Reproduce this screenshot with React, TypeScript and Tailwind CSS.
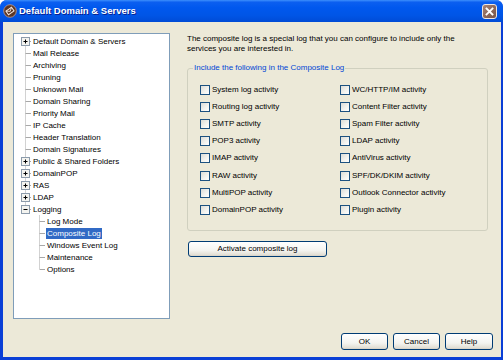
import React from 'react';

type Node = {
  label: string;
  level: 1 | 2;
  box?: '+' | '-';
  first?: boolean;
  last?: boolean;
  selected?: boolean;
};

const tree: Node[] = [
  { label: 'Default Domain & Servers', level: 1, box: '+', first: true },
  { label: 'Mail Release', level: 1 },
  { label: 'Archiving', level: 1 },
  { label: 'Pruning', level: 1 },
  { label: 'Unknown Mail', level: 1 },
  { label: 'Domain Sharing', level: 1 },
  { label: 'Priority Mail', level: 1 },
  { label: 'IP Cache', level: 1 },
  { label: 'Header Translation', level: 1 },
  { label: 'Domain Signatures', level: 1 },
  { label: 'Public & Shared Folders', level: 1, box: '+' },
  { label: 'DomainPOP', level: 1, box: '+' },
  { label: 'RAS', level: 1, box: '+' },
  { label: 'LDAP', level: 1, box: '+' },
  { label: 'Logging', level: 1, box: '-', last: true },
  { label: 'Log Mode', level: 2 },
  { label: 'Composite Log', level: 2, selected: true },
  { label: 'Windows Event Log', level: 2 },
  { label: 'Maintenance', level: 2 },
  { label: 'Options', level: 2, last: true },
];

const leftChecks = [
  'System log activity',
  'Routing log activity',
  'SMTP activity',
  'POP3 activity',
  'IMAP activity',
  'RAW activity',
  'MultiPOP activity',
  'DomainPOP activity',
];

const rightChecks = [
  'WC/HTTP/IM activity',
  'Content Filter activity',
  'Spam Filter activity',
  'LDAP activity',
  'AntiVirus activity',
  'SPF/DK/DKIM activity',
  'Outlook Connector activity',
  'Plugin activity',
];

const font = "font-['Liberation_Sans',Arial,sans-serif]";

// tree connector drawn in an 11x12 cell
const Connector: React.FC<{ node: Node }> = ({ node }) => {
  const top = node.first ? 6 : 0;
  const bottom = node.last ? 6 : 12;
  return (
    <svg width="11" height="12" viewBox="0 0 11 12" className="shrink-0">
      <line x1="5.5" y1={top} x2="5.5" y2={bottom} stroke="#d2d2d2" strokeWidth="1" />
      <line x1="5.5" y1="6.5" x2="11" y2="6.5" stroke="#a8a8a8" strokeWidth="1" />
      {node.box && (
        <>
          <rect x="1.5" y="2.5" width="8" height="8" fill="#f4f4f0" stroke="#8c9bab" strokeWidth="1" />
          <line x1="3.5" y1="6.5" x2="7.5" y2="6.5" stroke="#000" strokeWidth="1" />
          {node.box === '+' && <line x1="5.5" y1="4.5" x2="5.5" y2="8.5" stroke="#000" strokeWidth="1" />}
        </>
      )}
    </svg>
  );
};

const XpButton: React.FC<{ children: React.ReactNode; className?: string }> = ({ children, className }) => (
  <button
    className={`flex items-center justify-center rounded-[3px] border border-[#003c74] bg-[linear-gradient(to_bottom,#ffffff_0%,#f4f4f0_60%,#e3e0d6_90%,#d6d0c5_100%)] text-[8px] text-black ${className ?? ''}`}
  >
    {children}
  </button>
);

const Check: React.FC<{ label: string }> = ({ label }) => (
  <div className="flex h-[17.2px] items-center gap-[2px]">
    <span className="h-[10px] w-[10px] shrink-0 border border-[#1c5180] bg-[linear-gradient(135deg,#dcdcd7_0%,#f4f4f0_60%,#ffffff_100%)]" />
    <span className="whitespace-nowrap text-[8px] leading-[10px]">{label}</span>
  </div>
);

export default function App() {
  return (
    <div className={`flex h-[360px] w-[503px] flex-col overflow-hidden rounded-t-[7px] bg-[#0a3fd6] ${font}`}>
      {/* Title bar */}
      <div className="flex h-[22px] shrink-0 items-center bg-[linear-gradient(to_bottom,#3d8ffc_0%,#0b5ff0_10%,#0058ee_35%,#0055e6_70%,#004bd6_100%)] pl-[3px] pr-[6px]">
        <svg width="14" height="14" viewBox="0 0 14 14" className="shrink-0">
          <circle cx="7" cy="7" r="6.3" fill="#5b3626" stroke="#c9a08a" strokeWidth="0.8" />
          <g transform="rotate(-35 7 7)">
            <rect x="3.6" y="4.8" width="6.8" height="4.4" fill="none" stroke="#f1e6dd" strokeWidth="1" />
            <path d="M3.6 4.8 L7 7.4 L10.4 4.8" fill="none" stroke="#f1e6dd" strokeWidth="0.8" />
          </g>
        </svg>
        <span className="ml-[2px] pt-[1px] text-[9.5px] font-bold text-white [text-shadow:1px_1px_0_#0a1f8f]">
          Default Domain &amp; Servers
        </span>
        <span className="ml-auto flex h-[15px] w-[15px] items-center justify-center rounded-[3px] border border-[#efe6e0] bg-[linear-gradient(135deg,#a88476_0%,#8a6556_60%,#76554a_100%)]">
          <svg width="9" height="9" viewBox="0 0 9 9">
            <path d="M1.5 1.5 L7.5 7.5 M7.5 1.5 L1.5 7.5" stroke="#fff" strokeWidth="1.8" strokeLinecap="square" />
          </svg>
        </span>
      </div>

      {/* Body */}
      <div className="mb-[3px] ml-[3px] mr-[2px] flex flex-1 flex-col bg-[#ece9d8] pb-[7px] pl-[10px] pr-[8px] pt-[11px]">
        <div className="flex items-start">
          {/* Tree */}
          <div className="h-[286px] w-[157px] shrink-0 border border-[#7f9db9] bg-white pt-[1px]">
            {tree.map((n) => (
              <div
                key={n.label}
                className={`flex h-[12px] items-center ${n.level === 1 ? 'pl-[6px]' : 'pl-[20px]'}`}
              >
                <Connector node={n} />
                <span
                  className={`ml-[1px] h-[11px] whitespace-nowrap px-[1px] text-[8px] leading-[11px] ${
                    n.selected ? 'bg-[#316ac5] text-white' : 'text-black'
                  }`}
                >
                  {n.label}
                </span>
              </div>
            ))}
          </div>

          {/* Right panel */}
          <div className="ml-[17px] mt-[1px] flex flex-1 flex-col">
            <p className="text-[8px] leading-[10px] text-black">
              The composite log is a special log that you can configure to include only the
              <br />
              services you are interested in.
            </p>

            <fieldset className="mt-[9px] w-[301px] rounded-[3px] border border-[#d0d0bf] pb-[11px] pl-[12px] pt-[8px]">
              <legend className="ml-[-7px] px-[1px] text-[8px] leading-[10px] text-[#0046d5]">
                Include the following in the Composite Log
              </legend>
              <div className="grid grid-cols-[140px_1fr]">
                <div className="flex flex-col">
                  {leftChecks.map((c) => (
                    <Check key={c} label={c} />
                  ))}
                </div>
                <div className="flex flex-col">
                  {rightChecks.map((c) => (
                    <Check key={c} label={c} />
                  ))}
                </div>
              </div>
            </fieldset>

            <XpButton className="ml-[1px] mt-[10px] h-[16px] w-[139px]">Activate composite log</XpButton>
          </div>
        </div>

        <div className="mt-auto flex justify-end gap-[5px]">
          <XpButton className="h-[17px] w-[47px]">OK</XpButton>
          <XpButton className="h-[17px] w-[47px]">Cancel</XpButton>
          <XpButton className="h-[17px] w-[48px]">Help</XpButton>
        </div>
      </div>
    </div>
  );
}
